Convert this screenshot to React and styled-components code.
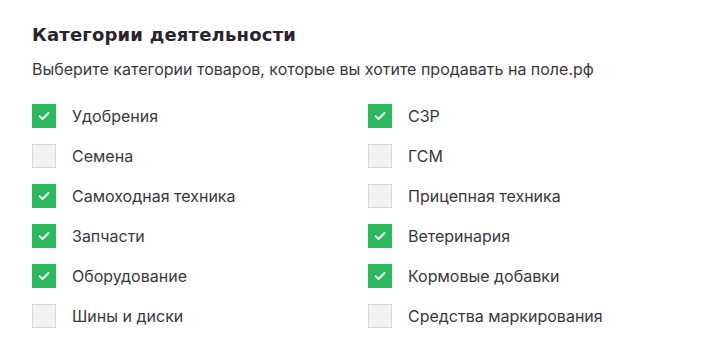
import styled, { createGlobalStyle } from "styled-components";

const GlobalStyle = createGlobalStyle`
  body {
    margin: 0;
    background: #ffffff;
  }
`;

const Section = styled.section`
  padding: 22px 32px 0 32px;
  font-family: Inter, "Noto Sans", sans-serif;
`;

const Title = styled.h2`
  margin: 0;
  font-family: "DejaVu Sans", sans-serif;
  font-weight: 700;
  font-size: 18px;
  line-height: 26px;
  color: #2a2330;
  letter-spacing: 0.2px;
`;

const Subtitle = styled.p`
  margin: 10px 0 16px 0;
  font-size: 16px;
  line-height: 22px;
  color: #3b3640;
`;

const Grid = styled.div`
  display: grid;
  grid-template-columns: 336px 336px;
  grid-auto-rows: 40px;
`;

const Option = styled.label`
  display: flex;
  align-items: center;
  gap: 16px;
  font-size: 16px;
  color: #3b3640;
  cursor: pointer;
`;

const Box = styled.span`
  box-sizing: border-box;
  width: 24px;
  height: 24px;
  flex: none;
  display: flex;
  align-items: center;
  justify-content: center;
  background: ${(p) => (p.$checked ? "#2cb85e" : "#f2f2f2")};
  border: 1px solid ${(p) => (p.$checked ? "#2cb85e" : "#d8d8d8")};
`;

const Check = () => (
  <svg width="12" height="10" viewBox="0 0 12 10" fill="none">
    <path d="M1.5 5.2L4.6 8L10.5 2" stroke="#ffffff" strokeWidth="1.8" strokeLinecap="round" strokeLinejoin="round" />
  </svg>
);

const categories = [
  ["Удобрения", true],
  ["СЗР", true],
  ["Семена", false],
  ["ГСМ", false],
  ["Самоходная техника", true],
  ["Прицепная техника", false],
  ["Запчасти", true],
  ["Ветеринария", true],
  ["Оборудование", true],
  ["Кормовые добавки", true],
  ["Шины и диски", false],
  ["Средства маркирования", false],
];

export default function App() {
  return (
    <>
      <GlobalStyle />
      <Section>
        <Title>Категории деятельности</Title>
        <Subtitle>Выберите категории товаров, которые вы хотите продавать на поле.рф</Subtitle>
        <Grid>
          {categories.map(([name, checked]) => (
            <Option key={name}>
              <Box $checked={checked}>{checked && <Check />}</Box>
              {name}
            </Option>
          ))}
        </Grid>
      </Section>
    </>
  );
}
